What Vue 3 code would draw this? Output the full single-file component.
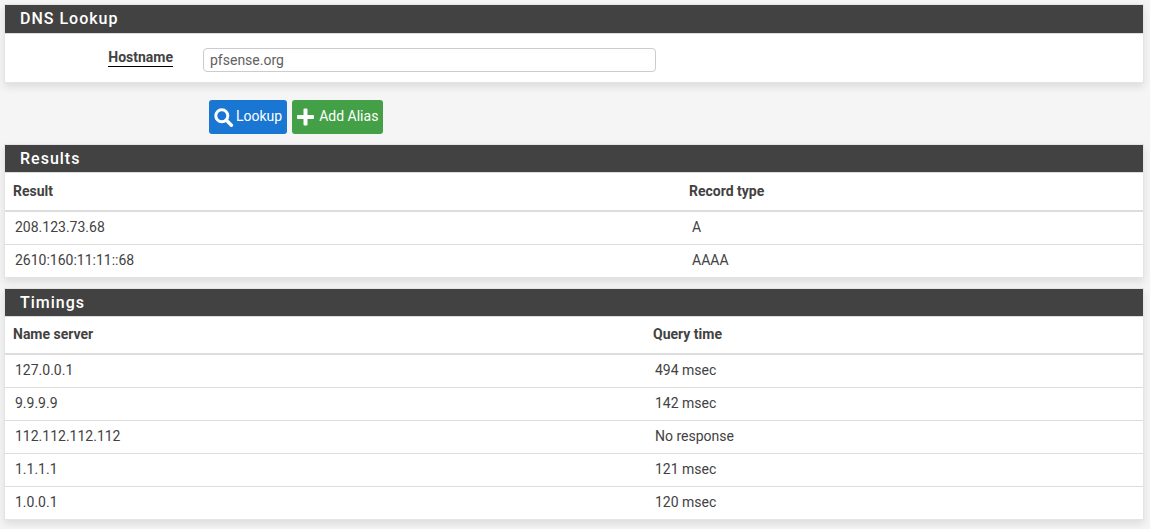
<script setup>
const results = [
  ['208.123.73.68', 'A'],
  ['2610:160:11:11::68', 'AAAA']
]
const timings = [
  ['127.0.0.1', '494 msec'],
  ['9.9.9.9', '142 msec'],
  ['112.112.112.112', 'No response'],
  ['1.1.1.1', '121 msec'],
  ['1.0.0.1', '120 msec']
]
</script>

<template>
  <div class="page">
    <section class="panel">
      <h2 class="heading tall">DNS Lookup</h2>
      <div class="form-row">
        <label class="label"><span>Hostname</span></label>
        <input class="input" value="pfsense.org" />
      </div>
    </section>

    <div class="actions">
      <button class="btn blue">
        <svg width="20" height="20" viewBox="0 0 20 20" class="ico search">
          <circle cx="7.8" cy="8.8" r="6" fill="none" stroke="#fff" stroke-width="3" />
          <path d="M12.4 13.2l5 5" stroke="#fff" stroke-width="3.4" stroke-linecap="round" />
        </svg>
        <span class="txt">Lookup</span>
      </button>
      <button class="btn green">
        <svg width="17" height="18" viewBox="0 0 17 18" class="ico plus">
          <rect x="6.5" y="0.5" width="4" height="17" rx="1" fill="#fff" />
          <rect x="0" y="7" width="17" height="4" rx="1" fill="#fff" />
        </svg>
        <span class="txt">Add Alias</span>
      </button>
    </div>

    <section class="panel">
      <h2 class="heading">Results</h2>
      <table class="table">
        <colgroup><col class="c-results" /><col /></colgroup>
        <thead><tr><th class="th-tall">Result</th><th class="th-tall">Record type</th></tr></thead>
        <tbody>
          <tr v-for="r in results" :key="r[0]"><td>{{ r[0] }}</td><td>{{ r[1] }}</td></tr>
        </tbody>
      </table>
    </section>

    <section class="panel">
      <h2 class="heading">Timings</h2>
      <table class="table">
        <colgroup><col class="c-timings" /><col /></colgroup>
        <thead><tr><th>Name server</th><th>Query time</th></tr></thead>
        <tbody>
          <tr v-for="t in timings" :key="t[0]"><td>{{ t[0] }}</td><td>{{ t[1] }}</td></tr>
        </tbody>
      </table>
    </section>
  </div>
</template>

<style>
html, body { background: #f5f5f5; }
</style>

<style scoped>
.page {
  box-sizing: border-box;
  width: 1150px;
  height: 529px;
  overflow: hidden;
  padding: 4px 6px 0 4px;
  background: #f5f5f5;
  font-family: Roboto, "Liberation Sans", sans-serif;
  font-size: 14px;
  color: #424242;
}
.panel {
  background: #fff;
  border: 1px solid #e4e4e4;
  box-shadow: 0 4px 8px rgba(0, 0, 0, 0.1);
  margin-bottom: 10px;
}
.heading {
  box-sizing: border-box;
  margin: 0;
  height: 28px;
  line-height: 27px;
  padding-left: 15px;
  background: #424242;
  border-bottom: 1px solid #ddd;
  color: #fff;
  font-size: 16px;
  font-weight: 500;
  letter-spacing: 1px;
}
.heading.tall { height: 29px; line-height: 28px; }
.form-row {
  display: flex;
  align-items: center;
  height: 48px;
}
.label {
  box-sizing: border-box;
  width: 168px;
  text-align: right;
  font-weight: 700;
}
.label span {
  border-bottom: 1px solid #000;
  display: inline-block;
  line-height: 16px;
  padding-bottom: 1px;
}
.input {
  box-sizing: border-box;
  width: 453px;
  height: 24px;
  margin-left: 30px;
  margin-top: 4px;
  padding: 0 6px;
  border: 1px solid #ccc;
  border-radius: 4px;
  font: 14px Roboto, sans-serif;
  color: #616161;
  background: #fff;
  outline: none;
}
.actions {
  display: flex;
  gap: 5px;
  padding-left: 205px;
  margin-top: 17px;
  margin-bottom: 10px;
}
.btn {
  display: flex;
  align-items: center;
  height: 34px;
  border: 0;
  border-radius: 3px;
  color: #fff;
  font: 14px Roboto, sans-serif;
  padding: 0 5px 0 5px;
  white-space: nowrap;
}
.txt { position: relative; top: -1px; }
.ico { flex: none; }
.search { margin-right: 2px; }
.plus { margin-right: 5px; }
.blue { background: #1976d2; }
.green { background: #43a047; }
.table {
  width: 100%;
  border-collapse: separate;
  border-spacing: 0;
  table-layout: fixed;
}
.c-results { width: 677px; }
.c-timings { width: 640px; }
th {
  box-sizing: border-box;
  height: 38px;
  padding: 0 8px 2px;
  text-align: left;
  font-weight: 700;
  border-bottom: 2px solid #ddd;
}
th.th-tall { height: 39px; }
th.th-tall + th.th-tall { padding-left: 7px; }
td {
  box-sizing: border-box;
  height: 33px;
  padding: 0 10px 2px;
  border-bottom: 1px solid #ddd;
}
tbody tr:last-child td { height: 32px; border-bottom: 0; }
</style>
